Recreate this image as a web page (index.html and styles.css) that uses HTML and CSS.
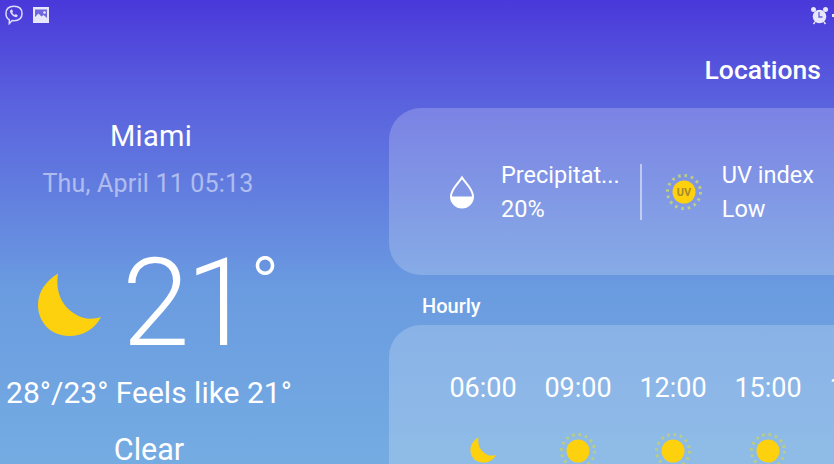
FILE: index.html
```html
<!DOCTYPE html>
<html lang="en">
<head>
<meta charset="utf-8">
<title>Weather</title>
<link rel="stylesheet" href="styles.css">
</head>
<body>
<div class="screen">
  <header class="status">
    <div class="status-icons">
      <svg class="viber" viewBox="0 0 20 20" width="20" height="20"><path d="M10 1.200c5 0 8 2.300 8 7.300s-3 7.200-8 7.200c-.7 0-1.300 0-1.900-.1L5.300 18.600v-3.900C2.900 13.500 2 11.500 2 8.500c0-5 3-7.300 8-7.300z" fill="none" stroke="#dcdcfa" stroke-width="1.500"/><path d="M6.800 4.700c.6-.4 1.100-.3 1.500.2l.6 1.100c.2.400.1.800-.2 1.100l-.5.400c.5 1.100 1.300 1.900 2.400 2.500l.5-.6c.3-.3.700-.3 1.100-.1l1.100.7c.5.300.5.900.1 1.400-.6.700-1.300.9-2.200.6-2.600-1-4.200-2.700-5.100-5.100-.2-1 .1-1.700.7-2.200z" fill="#dcdcfa"/></svg>
      <svg class="gallery" viewBox="0 0 18 16" width="18" height="16"><path d="M1 0h16v16H1z" fill="#e6e7fb"/><path d="M3 10l3.500-3.500 3 3 2-1.500 3.500 3V2.500H3z" fill="#7067de"/><circle cx="12.500" cy="5.500" r="1.300" fill="#e6e7fb"/></svg>
    </div>
    <div class="status-right">
      <svg class="alarm" viewBox="0 0 19 19" width="19" height="19"><circle cx="9.500" cy="10.500" r="6.800" fill="#e6e7fb"/><circle cx="3.500" cy="3.500" r="2.500" fill="#e6e7fb"/><circle cx="15.500" cy="3.500" r="2.500" fill="#e6e7fb"/><path d="M9 6v5h3.500" fill="none" stroke="#6a61dc" stroke-width="1.300"/><path d="M5 16l-1.500 2M14 16l1.500 2" stroke="#e6e7fb" stroke-width="1.500"/></svg>
      <span class="status-dot"></span>
    </div>
  </header>
  <main class="content">
    <section class="now">
      <h1 class="city">Miami</h1>
      <p class="date">Thu, April 11 05:13</p>
      <div class="temp-row">
        <svg class="moon" viewBox="0 0 64 64" width="64" height="64"><path d="M21 .5C10 7 1 18 1 32c0 17 13 31 31 31 14 0 26-7 32-19C55 47 45 46 38 41 26 34 18 20 21 .5z" fill="#fdd10d"/></svg>
        <span class="temp">21</span><span class="deg">°</span>
      </div>
      <p class="range">28°/23° Feels like 21°</p>
      <p class="cond">Clear</p>
    </section>
    <section class="side">
      <div class="locations">Locations</div>
      <div class="card stats">
        <div class="stat">
          <svg class="drop" viewBox="0 0 26 34" width="26" height="34"><path d="M13 2.500C9 9 2 14 2 21.500a11 11 0 0 0 22 0C24 14 17 9 13 2.500z" fill="none" stroke="#fff" stroke-width="2"/><path d="M2 21.500h22a11 11 0 0 1-22 0z" fill="#fff"/></svg>
          <div class="stat-text"><span>Precipitat...</span><span>20%</span></div>
        </div>
        <div class="divider"></div>
        <div class="stat uv">
          <svg class="sun" viewBox="0 0 36 36" width="36" height="36"><circle class="rays" cx="18" cy="18" r="16.500"/><circle cx="18" cy="18" r="11.500" fill="#fdd10d"/><text x="18" y="21.500" text-anchor="middle" class="uv-label">UV</text></svg>
          <div class="stat-text"><span>UV index</span><span>Low</span></div>
        </div>
      </div>
      <h2 class="hourly-title">Hourly</h2>
      <div class="card hourly">
        <div class="hour"><span>06:00</span><svg class="small-moon" viewBox="0 0 64 64" width="26" height="26"><path d="M21 .5C10 7 1 18 1 32c0 17 13 31 31 31 14 0 26-7 32-19C55 47 45 46 38 41 26 34 18 20 21 .5z" fill="#fdd10d"/></svg></div>
        <div class="hour"><span>09:00</span><svg class="small-sun" viewBox="0 0 36 36" width="36" height="36"><circle class="rays" cx="18" cy="18" r="16.500"/><circle cx="18" cy="18" r="11.500" fill="#fdd10d"/></svg></div>
        <div class="hour"><span>12:00</span><svg class="small-sun" viewBox="0 0 36 36" width="36" height="36"><circle class="rays" cx="18" cy="18" r="16.500"/><circle cx="18" cy="18" r="11.500" fill="#fdd10d"/></svg></div>
        <div class="hour"><span>15:00</span><svg class="small-sun" viewBox="0 0 36 36" width="36" height="36"><circle class="rays" cx="18" cy="18" r="16.500"/><circle cx="18" cy="18" r="11.500" fill="#fdd10d"/></svg></div>
        <div class="hour"><span>18:00</span></div>
      </div>
    </section>
  </main>
</div>
</body>
</html>
```
FILE: styles.css
```css
* { box-sizing: border-box; }
html, body { margin: 0; height: 100%; overflow: hidden; }
body { font-family: Roboto, "Liberation Sans", sans-serif; color: #fff; }
.screen {
  width: 834px; height: 464px; overflow: hidden;
  display: flex; flex-direction: column;
  background: linear-gradient(180deg, #4a38da 0%, #5a62de 22%, #6a9be0 62%, #74ace2 100%);
}
.status { flex: none; height: 30px; display: flex; justify-content: space-between; align-items: center; padding: 0 0 0 4px; }
.status-icons { display: flex; align-items: center; gap: 8px; }
.status-right { display: flex; align-items: center; gap: 3px; }
.status-dot { width: 2px; height: 3px; background: #e6e7fb; }
.content { flex: 1; display: flex; min-height: 0; }
.now { flex: none; width: 298px; display: flex; flex-direction: column; align-items: center; padding-top: 89px; }
.city { flex: none; margin: 0 0 0 4px; font-size: 29px; font-weight: 400; line-height: 34px; letter-spacing: .3px; }
.date { flex: none; margin: 16px 2px 0 0; font-size: 25px; line-height: 30px; color: rgba(255,255,255,.5); letter-spacing: .2px; }
.temp-row { flex: none; align-self: flex-start; display: flex; align-items: center; margin: 40px 0 0 37px; height: 130px; }
.moon { flex: none; margin: 2px 21px 0 0; }
.temp { font-size: 122px; font-weight: 300; line-height: 130px; letter-spacing: -4px; }
.deg { align-self: flex-start; margin-left: 1px; font-size: 78px; font-weight: 300; line-height: 94px; }
.range { flex: none; margin: 7px 0 0; font-size: 30px; line-height: 34px; white-space: nowrap; }
.cond { flex: none; margin: 23px 0 0; font-size: 30.500px; line-height: 34px; }
.side { flex: 1; min-width: 0; padding-left: 91px; }
.locations { font-size: 26.500px; font-weight: 500; line-height: 30px; text-align: right; padding-right: 13px; margin-top: 25px; }
.card { border-radius: 32px 0 0 32px; background: rgba(255,255,255,.2); }
.stats { margin-top: 23px; height: 167px; display: flex; align-items: center; padding-left: 60px; }
.stat { display: flex; align-items: center; gap: 26px; }
.stat.uv { gap: 20px; }
.stat-text { display: flex; flex-direction: column; gap: 5px; padding-top: 2px; font-size: 23.500px; line-height: 29px; white-space: nowrap; }
.divider { width: 2px; height: 56px; margin: 0 24px 0 20px; background: rgba(255,255,255,.5); }
.rays { fill: none; stroke: #b9ce80; stroke-width: 3; stroke-dasharray: 2.600 3.880; }
.uv-label { font: 700 11px Roboto, sans-serif; fill: #a68c2c; }
.hourly-title { margin: 19px 0 0 33px; font-size: 20px; font-weight: 500; line-height: 24px; }
.hourly { margin-top: 7px; height: 200px; display: flex; gap: 25px; padding: 48px 0 0 59px; white-space: nowrap; }
.hour { flex: none; width: 70px; display: flex; flex-direction: column; align-items: center; gap: 30px; font-size: 27px; line-height: 30px; }
.small-sun { flex: none; }
.small-moon { flex: none; margin-top: 4px; }
```
